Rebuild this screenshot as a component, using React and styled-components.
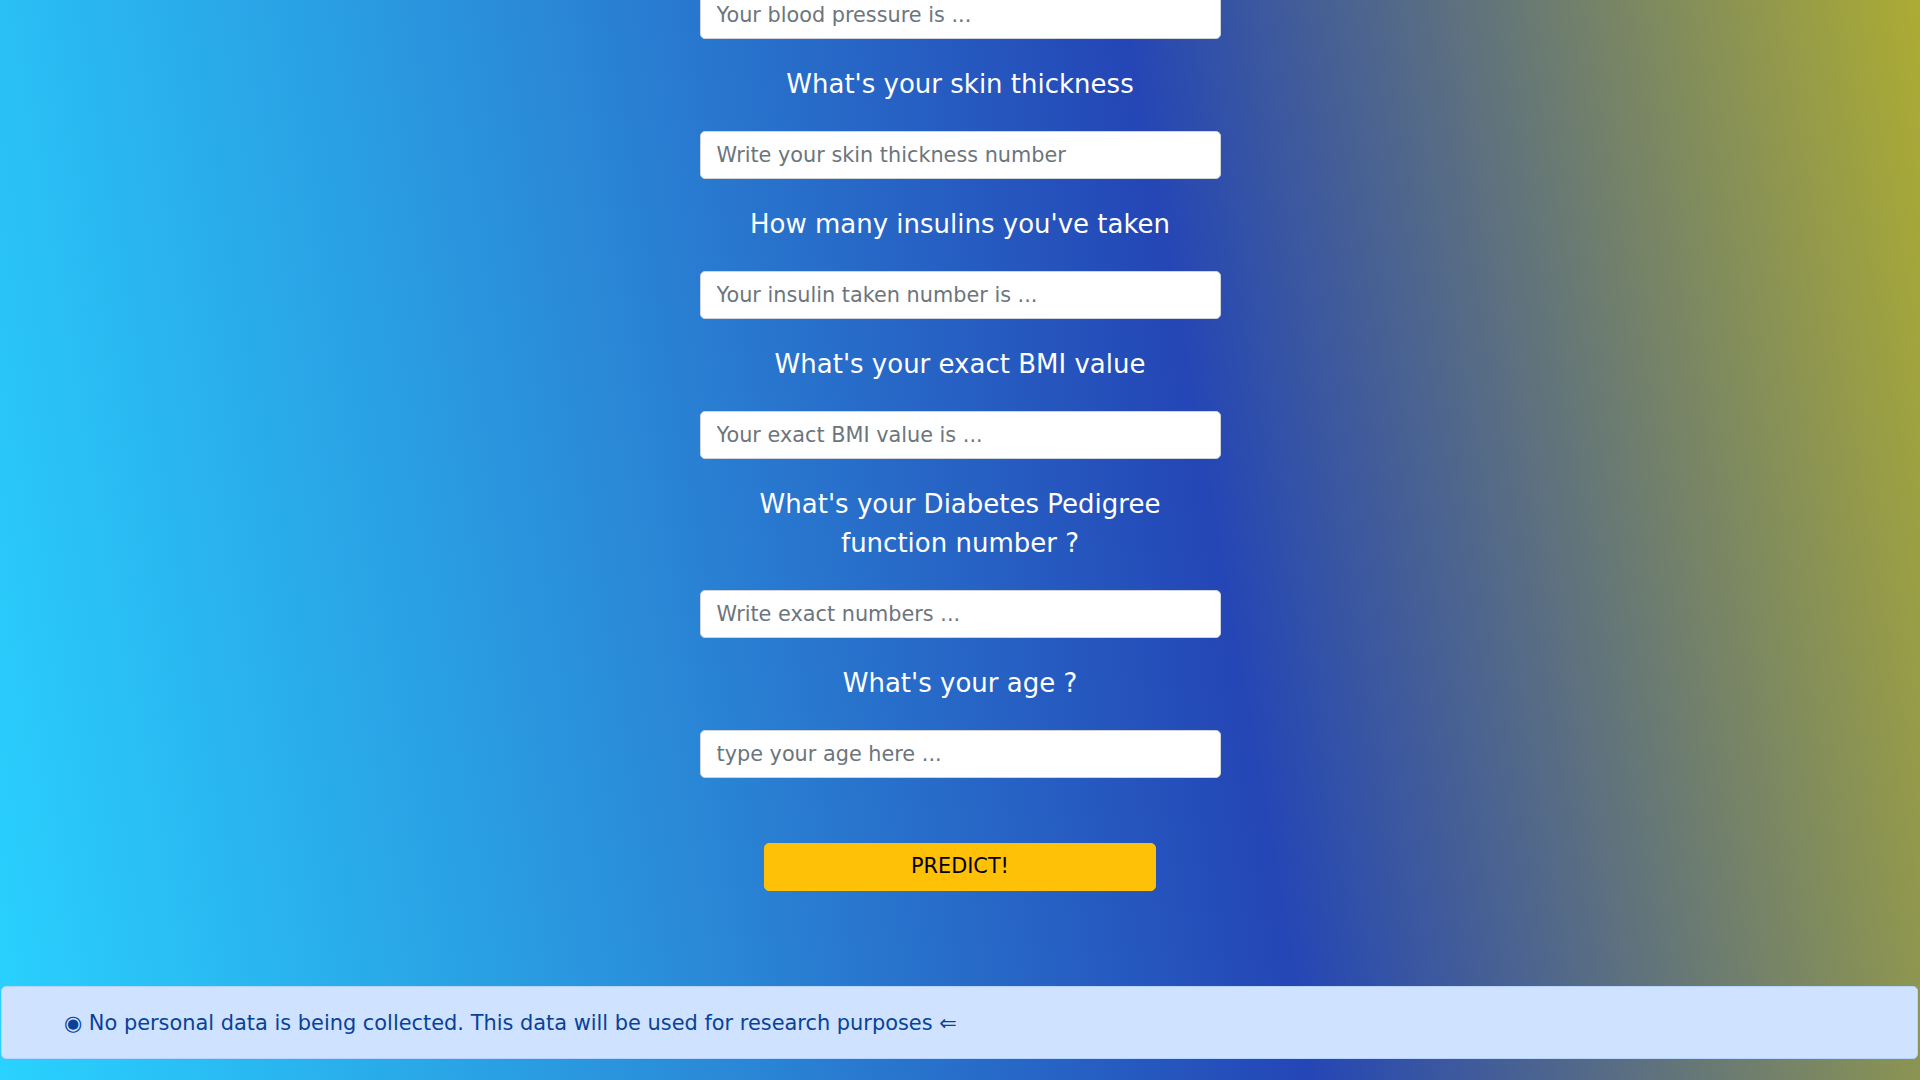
import React from "react";
import styled, { createGlobalStyle } from "styled-components";

const GlobalStyle = createGlobalStyle`
  html, body {
    margin: 0;
    padding: 0;
    overflow: hidden;
  }
  body {
    font-family: "DejaVu Sans", "Noto Sans", sans-serif;
  }
  * { box-sizing: border-box; }
`;

const Page = styled.div`
  width: 100vw;
  height: 100vh;
  overflow: hidden;
  display: flex;
  flex-direction: column;
  background: linear-gradient(80deg, #29d2ff 0%, #2a8ad8 34%, #2446b6 62%, #acac33 100%);
`;

const Form = styled.form`
  margin-top: -9px;
  display: flex;
  flex-direction: column;
  align-items: center;
`;

const Question = styled.h3`
  margin: 26px 0 27px;
  max-width: 470px;
  font-size: 26px;
  font-weight: 400;
  line-height: 39px;
  color: #ffffff;
  text-align: center;
`;

const Field = styled.input`
  display: block;
  width: 521px;
  height: 48px;
  padding: 0 16px;
  font-family: "DejaVu Sans", sans-serif;
  font-size: 20.8px;
  line-height: 1.5;
  color: #212529;
  background: #ffffff;
  border: 1px solid #ced4da;
  border-radius: 5px;
  outline: none;
  &::placeholder {
    color: #6c757d;
    opacity: 1;
  }
`;

const PredictButton = styled.button`
  margin-top: 65px;
  width: 392px;
  height: 48px;
  padding: 0 16px;
  font-family: "DejaVu Sans", sans-serif;
  font-size: 20.8px;
  line-height: 1.5;
  color: #000000;
  background: #ffc107;
  border: 1px solid #ffc107;
  border-radius: 5px;
  cursor: pointer;
`;

const Notice = styled.div`
  margin: 95px 2px 21px 1px;
  height: 74px;
  padding: 0 62px;
  display: flex;
  align-items: center;
  font-size: 20.9px;
  line-height: 30px;
  color: #084298;
  background: #cfe2ff;
  border: 1px solid #b6d4fe;
  border-radius: 5px;
  white-space: nowrap;
`;

const questions = [
  { label: null, placeholder: "Your blood pressure is ..." },
  { label: "What's your skin thickness", placeholder: "Write your skin thickness number" },
  { label: "How many insulins you've taken", placeholder: "Your insulin taken number is ..." },
  { label: "What's your exact BMI value", placeholder: "Your exact BMI value is ..." },
  { label: "What's your Diabetes Pedigree function number ?", placeholder: "Write exact numbers ..." },
  { label: "What's your age ?", placeholder: "type your age here ..." },
];

export default function App() {
  return (
    <>
      <GlobalStyle />
      <Page>
        <Form onSubmit={(e) => e.preventDefault()}>
          {questions.map((q, i) => (
            <React.Fragment key={i}>
              {q.label && <Question>{q.label}</Question>}
              <Field type="text" placeholder={q.placeholder} />
            </React.Fragment>
          ))}
          <PredictButton type="submit">PREDICT!</PredictButton>
        </Form>
        <Notice>
          ◉ No personal data is being collected. This data will be used for research purposes ⇐
        </Notice>
      </Page>
    </>
  );
}
